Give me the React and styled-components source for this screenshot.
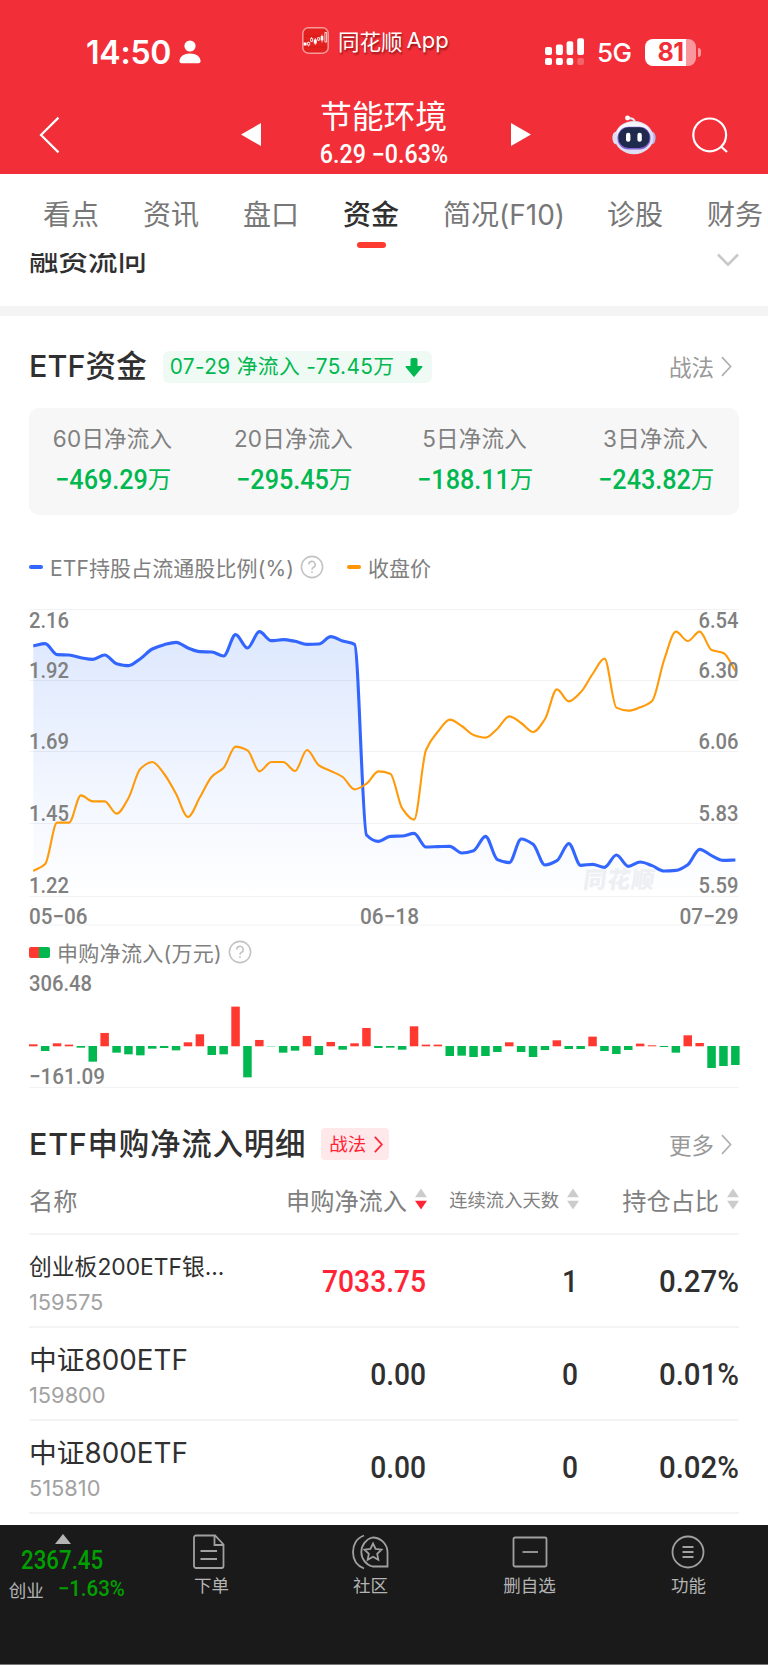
import React from 'react'
import styled, { createGlobalStyle } from 'styled-components'

const blue = [168, 161, 194, 195, 203, 208, 195, 221, 227, 206, 177, 164, 157, 174, 185, 186, 198, 134, 174, 125,
  152, 149, 154, 163, 162, 140, 153, 163, 735, 754, 739, 738, 730, 771, 770, 769, 789, 782, 739, 809,
  818, 747, 763, 825, 812, 761, 826, 823, 832, 795, 829, 816, 827, 843, 841, 824, 778, 797, 811, 810]
const orange = [843, 822, 698, 698, 616, 634, 634, 671, 624, 536, 516, 552, 612, 681, 622, 560, 533, 470, 481, 544,
  516, 516, 543, 480, 526, 543, 561, 598, 581, 544, 551, 655, 689, 480, 425, 389, 408, 435, 443, 416,
  379, 399, 426, 387, 298, 334, 307, 252, 206, 353, 362, 352, 333, 211, 125, 153, 125, 180, 189, 243]
const flow = [6, -15, 9, 5, -5, -47, 40, -20, -25, -28, -8, -6, -13, 12, 36, -27, -25, 119, -94, 19,
  -1, -20, -14, 31, -27, 13, -11, 9, 55, -6, -5, -11, 60, 5, 5, -30, -29, -33, -30, -18,
  12, -18, -33, -12, 18, -9, -9, 29, -15, -24, -12, 8, 3, -3, -20, 33, 10, -66, -60, -57]

const STEP = 11.9

// monotone cubic through evenly spaced points
const curve = (values) => {
  const p = values.map((v, i) => [4.3 + i * STEP, v / 3 - 10])
  const d = p.slice(1).map((q, i) => (q[1] - p[i][1]) / STEP)
  const m = p.map((q, i) => {
    if (i === 0) return d[0]
    if (i === p.length - 1) return d[i - 1]
    const a = d[i - 1]
    const b = d[i]
    return a * b <= 0 ? 0 : (2 * a * b) / (a + b)
  })
  let path = `M${p[0][0]} ${p[0][1]}`
  for (let i = 1; i < p.length; i++) {
    const h = STEP / 3
    path += `C${p[i - 1][0] + h} ${p[i - 1][1] + m[i - 1] * h} ${p[i][0] - h} ${p[i][1] - m[i] * h} ${p[i][0]} ${p[i][1]}`
  }
  return path
}

const stats = [
  { label: '60日净流入', value: '−469.29' },
  { label: '20日净流入', value: '−295.45' },
  { label: '5日净流入', value: '−188.11' },
  { label: '3日净流入', value: '−243.82' },
]

const rows = [
  { name: '创业板200ETF银...', code: '159575', amount: '7033.75', days: '1', ratio: '0.27%', small: true, up: true },
  { name: '中证800ETF', code: '159800', amount: '0.00', days: '0', ratio: '0.01%' },
  { name: '中证800ETF', code: '515810', amount: '0.00', days: '0', ratio: '0.02%' },
]

const Label = ({ x, y, w, end, children }) => (
  <text x={end ? x - w : x} y={y} textLength={w} lengthAdjust="spacingAndGlyphs">{children}</text>
)

const Help = () => (
  <svg width="24" height="24" viewBox="0 0 24 24" fill="none" stroke="#c4c4c4" strokeWidth="1.6">
    <circle cx="12" cy="12" r="10.6" />
    <path d="M8.8 9.6a3.2 3.2 0 1 1 4.8 2.7c-1.1.6-1.6 1.1-1.6 2.4" />
    <path d="M12 16.2v1.8" />
  </svg>
)

const Arrow = ({ color = '#b0b0b0', width = 11, height = 21, stroke = 1.7 }) => (
  <svg width={width} height={height} viewBox="0 0 11 21" fill="none" stroke={color} strokeWidth={stroke}>
    <path d="M1 1.2L9.6 10.5L1 19.8" />
  </svg>
)

const Sort = ({ down }) => (
  <svg width="12" height="22" viewBox="0 0 12 22">
    <path d="M6 0.5L12 9.3H0Z" fill="#cccccc" />
    <path d="M6 21.5L12 12.7H0Z" fill={down ? '#ff2436' : '#cccccc'} />
  </svg>
)

const Robot = () => (
  <svg width="44" height="42" viewBox="0 0 44 42">
    <path d="M16 4.5c4-1 6.5.5 7 4" fill="none" stroke="#e9e9f8" strokeWidth="2" />
    <circle cx="15.5" cy="4" r="2.4" fill="#fff" />
    <ellipse cx="3.8" cy="24" rx="3.4" ry="6.2" fill="#dcdcf2" />
    <ellipse cx="40.2" cy="24" rx="3.4" ry="6.2" fill="#b9b6e6" />
    <ellipse cx="22" cy="23.6" rx="19.4" ry="16.6" fill="#dedff2" />
    <ellipse cx="21.5" cy="19.5" rx="16.5" ry="11.5" fill="#f6f6fd" />
    <rect x="5.5" y="12.7" width="33" height="22.8" rx="11" fill="#8763d8" />
    <rect x="6.4" y="13.2" width="31.2" height="20.8" rx="10.2" fill="#1f2a4c" />
    <rect x="14" y="18.8" width="4.4" height="9" rx="2.1" fill="#fff" />
    <rect x="25.4" y="18.8" width="4.4" height="9" rx="2.1" fill="#fff" />
  </svg>
)

const Header = () => (
  <Top>
    <StatusBar>
      <Time>14:50</Time>
      <svg width="22" height="24" viewBox="0 0 22 24" fill="#fff">
        <circle cx="11" cy="6" r="5.6" />
        <path d="M0.5 21.2C0.5 16.5 5 13.6 11 13.6S21.5 16.5 21.5 21.2Q21.5 23.2 19.5 23.2H2.5Q0.5 23.2 0.5 21.2Z" />
      </svg>
      <Brand>
        <svg width="27" height="27" viewBox="0 0 27 27">
          <rect x="0.8" y="0.8" width="25.4" height="25.4" rx="5.5" fill="#e3211f" stroke="#f79a9c" strokeWidth="1.5" />
          <path d="M2 9h23M2 14h23M2 20h23" stroke="#c91a1b" strokeWidth="0.5" />
          <path d="M1.6 15.5h3v3h-3zM11.8 12.5h3v4h-3zM18.7 9h2.6v4.4h-2.6z" fill="#fff" />
          <path d="M6.6 14.5v5M9.6 10v5M13.3 11v7M16.6 10v4M20 7.5v8" stroke="#fff" strokeWidth="0.7" />
          <path d="M5.5 15.5h2.2v2.5H5.5zM8.6 11.5h2v2.8h-2zM15.6 10.7h2v2.5h-2zM22.9 5.5h1.7v9.6h-1.7z" fill="#e3211f" stroke="#fff" strokeWidth="0.8" />
        </svg>
        <span>同花顺</span><b>App</b>
      </Brand>
      <svg width="40" height="28" viewBox="0 0 40 28" fill="#fff">
        <rect x="0" y="9" width="7" height="8" rx="2" />
        <rect x="10.9" y="6.6" width="7" height="10.4" rx="2" />
        <rect x="21.6" y="3.3" width="6.6" height="13.7" rx="2" />
        <rect x="32.2" y="0.3" width="6.8" height="16.7" rx="2" />
        <rect x="0" y="20" width="7" height="7" rx="2" />
        <rect x="10.9" y="20" width="7" height="7" rx="2" />
        <rect x="21.6" y="20" width="6.6" height="7" rx="2" />
        <rect x="32.2" y="20" width="6.8" height="7" rx="2" opacity="0.25" />
      </svg>
      <Network>5G</Network>
      <Battery><span>81</span></Battery>
      <BatteryTip />
    </StatusBar>
    <NavBar>
      <svg width="21" height="38" viewBox="0 0 21 38" fill="none" stroke="#fff" strokeWidth="2.2">
        <path d="M19.5 1.6L2 19L19.5 36.4" />
      </svg>
      <Left width="20" height="23" viewBox="0 0 20 23"><path d="M0 11.5L20 0V23Z" fill="#fff" /></Left>
      <Stock>
        <h1>节能环境</h1>
        <Num $size={25} $scale={0.93} $weight={500}>6.29 −0.63%</Num>
      </Stock>
      <Right width="20" height="23" viewBox="0 0 20 23"><path d="M20 11.5L0 0V23Z" fill="#fff" /></Right>
      <Robot />
      <Search width="38" height="38" viewBox="0 0 38 38" fill="none" stroke="#fff" strokeWidth="2.2">
        <circle cx="18.7" cy="18.9" r="16.4" />
        <path d="M30 30.5L36 36" />
      </Search>
    </NavBar>
  </Top>
)

const App = () => (
  <Page>
    <GlobalStyle />
    <Header />
    <Tabs>
      <Tab>看点</Tab>
      <Tab>资讯</Tab>
      <Tab>盘口</Tab>
      <Tab $active>资金</Tab>
      <Tab $tight>简况(F10)</Tab>
      <Tab>诊股</Tab>
      <Tab>财务</Tab>
    </Tabs>
    <Collapsed>
      <h2>融资流向</h2>
      <svg width="22" height="14" viewBox="0 0 22 14" fill="none" stroke="#c8c8c8" strokeWidth="2.6">
        <path d="M1 1.5L11 11.7L21 1.5" />
      </svg>
    </Collapsed>
    <Divider />

    <Heading $top={28}>
      <h2>ETF资金</h2>
      <FlowBadge>
        07-29 净流入 -75.45万
        <svg width="18" height="19" viewBox="0 0 18 19" fill="#00b84f">
          <path d="M5.5 1.5Q5.5 0 7 0h4Q12.5 0 12.5 1.5V8H17Q18 8.4 17.3 9.3L9.6 18.4Q9 19 8.4 18.4L.7 9.3Q0 8.4 1 8H5.5Z" />
        </svg>
      </FlowBadge>
      <More>战法<Arrow /></More>
    </Heading>
    <Stats>
      {stats.map((s) => (
        <Stat key={s.label}>
          <span>{s.label}</span>
          <StatValue><Num $size={28} $scale={0.9} $weight={500}>{s.value}</Num><i>万</i></StatValue>
        </Stat>
      ))}
    </Stats>

    <Legend>
      <Dash $color="#3366ff" />
      <LegendText $spacing={0.1}>ETF持股占流通股比例(%)</LegendText>
      <Help />
      <Dash $color="#ff9500" $gap={23} />
      <LegendText>收盘价</LegendText>
    </Legend>
    <Chart width="710" height="330" viewBox="0 0 710 330">
      <defs>
        <linearGradient id="fill" x1="0" y1="30" x2="0" y2="297" gradientUnits="userSpaceOnUse">
          <stop offset="0" stopColor="#3a78f8" stopOpacity="0.17" />
          <stop offset="1" stopColor="#3a78f8" stopOpacity="0" />
        </linearGradient>
      </defs>
      <path d={`${curve(blue)}V296H4.3Z`} fill="url(#fill)" />
      <path d="M0 9.5H710M0 80.5H710M0 151.5H710M0 223.5H710M0 296.5H710M0 325H710" stroke="#000" strokeOpacity="0.05" />
      <Watermark x="594" y="288" textLength="71" transform="skewX(-8)">同花顺</Watermark>
      <path d={curve(blue)} fill="none" stroke="#3366ff" strokeWidth="3.1" strokeLinejoin="round" />
      <path d={curve(orange)} fill="none" stroke="#ff9a0a" strokeWidth="2.1" strokeLinejoin="round" />
      <g>
        <Label x={0} y={28} w={40}>2.16</Label>
        <Label x={0} y={78} w={40}>1.92</Label>
        <Label x={0} y={149} w={40}>1.69</Label>
        <Label x={0} y={221} w={40}>1.45</Label>
        <Label x={0} y={293} w={40}>1.22</Label>
        <Label end x={709.5} y={28} w={40}>6.54</Label>
        <Label end x={709.5} y={78} w={40}>6.30</Label>
        <Label end x={709.5} y={149} w={40}>6.06</Label>
        <Label end x={709.5} y={221} w={40}>5.83</Label>
        <Label end x={709.5} y={293} w={40}>5.59</Label>
        <Label x={0} y={323.5} w={58.5}>05−06</Label>
        <Label x={331} y={323.5} w={59}>06−18</Label>
        <Label end x={709.5} y={323.5} w={59}>07−29</Label>
      </g>
    </Chart>
    <BarLegend>
      <Swatch />
      <LegendText $spacing={0.3}>申购净流入(万元)</LegendText>
      <Help />
    </BarLegend>
    <Chart width="710" height="120" viewBox="0 0 710 120">
      {flow.map((v, i) => (
        <rect
          key={i}
          x={i * STEP}
          y={v > 0 ? 77.3 - v / 3 : 77}
          width="8.5"
          height={Math.abs(v) / 3}
          fill={v > 0 ? '#ff3930' : '#00b84f'}
        />
      ))}
      <path d="M0 118.5H710" stroke="#f3f3f3" />
      <Label x={0} y={21.5} w={63}>306.48</Label>
      <Label x={0} y={114.5} w={76}>−161.09</Label>
    </Chart>

    <Heading $top={33} $spacing={0.75}>
      <h2>ETF申购净流入明细</h2>
      <TipBadge>战法<Arrow color="#ff2436" width={9} height={17} stroke={2.2} /></TipBadge>
      <More>更多<Arrow /></More>
    </Heading>
    <TableHead>
      <Cell $left>名称</Cell>
      <Cell>申购净流入<Sort down /></Cell>
      <Cell $small>连续流入天数<Sort /></Cell>
      <Cell>持仓占比<Sort /></Cell>
    </TableHead>
    {rows.map((r) => (
      <Row key={r.code}>
        <Fund $small={r.small}>
          <b>{r.name}</b>
          <span>{r.code}</span>
        </Fund>
        <Value $up={r.up}>{r.amount}</Value>
        <Value>{r.days}</Value>
        <Value $last>{r.ratio}</Value>
      </Row>
    ))}

    <BottomBar>
      <Index>
        <svg width="16" height="10" viewBox="0 0 16 10"><path d="M8 0L16 10H0Z" fill="#b4b4b4" /></svg>
        <Num $size={25} $scale={0.89} $weight={500}>2367.45</Num>
        <div>创业<Num $size={21.5} $scale={0.95} $weight={500}>−1.63%</Num></div>
      </Index>
      <Action $shift={5}>
        <svg width="36" height="36" viewBox="0 0 36 36">
          <path d="M5 1.5H24L32.5 10.5V32A2 2 0 0 1 30.5 34H5A2 2 0 0 1 3 32V3.500A2 2 0 0 1 5 1.500ZM23.500 2V11H32M9.500 17H26M9.500 25H26" />
        </svg>
        下单
      </Action>
      <Action $shift={2}>
        <svg width="38" height="36" viewBox="0 0 38 36">
          <path d="M21.500 3.500A15 15 0 0 0 21.500 32.500H36.500V18A15 15 0 0 0 21.500 3.500Z" />
          <path d="M13 1.500C5.500 4 2 11 2 18S5.500 31.500 13 34.500" />
          <path d="M22 9.500L24.600 14.900L30.500 15.700L26.200 19.800L27.300 25.700L22 22.800L16.700 25.700L17.800 19.800L13.500 15.700L19.400 14.900Z" />
        </svg>
        社区
      </Action>
      <Action>
        <svg width="36" height="36" viewBox="0 0 36 36">
          <rect x="1.5" y="3.5" width="33" height="29" rx="1.500" />
          <path d="M10.500 18H26" />
        </svg>
        删自选
      </Action>
      <Action $shift={2}>
        <svg width="34" height="36" viewBox="0 0 34 36">
          <circle cx="17" cy="18" r="15.500" />
          <path d="M11.500 13H22.500M11.500 18H22.500M11.500 23H22.500" />
        </svg>
        功能
      </Action>
    </BottomBar>
  </Page>
)

export default App

const GlobalStyle = createGlobalStyle`
  * {
    box-sizing: border-box;
  }
  body {
    margin: 0;
    background: #fff;
  }
  h1, h2 {
    margin: 0;
  }
  svg {
    flex-shrink: 0;
  }
`

const Page = styled.div`
  width: 768px;
  height: 1665px;
  overflow: hidden;
  display: flex;
  flex-direction: column;
  background: #fff;
  color: #303030;
  font-family: Inter, 'Noto Sans CJK SC', sans-serif;
  white-space: nowrap;
`

const Num = styled.span`
  display: inline-block;
  font-family: Roboto, 'Liberation Sans', sans-serif;
  font-size: ${(props) => props.$size}px;
  font-weight: ${(props) => props.$weight};
  line-height: 28px;
  transform: scaleX(${(props) => props.$scale});
`

const Top = styled.header`
  height: 174px;
  flex-shrink: 0;
  background: #f22f38;
  color: #fff;
`

const StatusBar = styled.div`
  height: 96px;
  padding: 8px 0 0 86px;
  display: flex;
  align-items: center;
`

const Time = styled.div`
  width: 93px;
  font-size: 32px;
  font-weight: 600;
  letter-spacing: -0.2px;
`

const Brand = styled.div`
  width: 243px;
  margin-left: 101px;
  margin-bottom: 24px;
  display: flex;
  align-items: center;
  font-size: 21.5px;
  text-shadow: 1px 2px 2px rgba(90, 0, 0, 0.6);

  span {
    margin-left: 9px;
  }
  b {
    margin-left: 4px;
    font-weight: 400;
    font-size: 22px;
  }
`

const Network = styled.div`
  width: 48px;
  margin-left: 12px;
  font-size: 26px;
  font-weight: 500;
  letter-spacing: -0.5px;
`

const Battery = styled.div`
  width: 51px;
  height: 27px;
  border-radius: 8px;
  background: linear-gradient(90deg, #fff 41px, #f8979c 41px);
  color: #f22f38;
  font-size: 25px;
  font-weight: 700;
  line-height: 27px;
  text-align: center;
  letter-spacing: -0.5px;
`

const BatteryTip = styled.div`
  width: 3px;
  height: 9px;
  margin-left: 2px;
  border-radius: 0 4px 4px 0;
  background: #f8979c;
`

const NavBar = styled.nav`
  height: 77px;
  padding-left: 39px;
  display: flex;
  align-items: center;
`

const Left = styled.svg`
  margin-left: 181px;
`

const Right = styled.svg`
  margin-right: 81px;
`

const Search = styled.svg`
  margin-left: 35px;
`

const Stock = styled.div`
  width: 250px;
  padding-right: 5px;
  display: flex;
  flex-direction: column;
  align-items: center;

  h1 {
    height: 44px;
    margin-top: -3px;
    font-size: 31.8px;
    font-weight: 400;
    line-height: 40px;
  }
`

const Tabs = styled.div`
  height: 79px;
  flex-shrink: 0;
  padding-left: 43px;
  display: flex;
  gap: 44px;
  position: relative;
  background: #fff;
`

const Tab = styled.div`
  position: relative;
  margin-right: ${(props) => (props.$tight ? -2 : 0)}px;
  font-size: 28px;
  line-height: 82px;
  color: ${(props) => (props.$active ? '#303030' : '#777')};
  font-weight: ${(props) => (props.$active ? 500 : 400)};

  &::after {
    content: '';
    display: ${(props) => (props.$active ? 'block' : 'none')};
    position: absolute;
    left: 14px;
    top: 68px;
    width: 29px;
    height: 6px;
    border-radius: 3px;
    background: #ff3a30;
  }
`

const Collapsed = styled.div`
  height: 53px;
  flex-shrink: 0;
  padding: 0 29px;
  display: flex;
  justify-content: space-between;
  align-items: flex-start;
  overflow: hidden;

  h2 {
    margin-top: -16px;
    font-size: 29.5px;
    line-height: 44px;
    font-weight: 500;
  }
`

const Divider = styled.div`
  height: 10px;
  flex-shrink: 0;
  background: #f4f4f4;
`

const Heading = styled.div`
  height: 44px;
  flex-shrink: 0;
  margin: ${(props) => props.$top}px 29px 0;
  display: flex;
  align-items: center;

  h2 {
    font-size: 30.5px;
    line-height: 44px;
    font-weight: 500;
    letter-spacing: ${(props) => props.$spacing || 0.1}px;
  }
`

const FlowBadge = styled.div`
  width: 269px;
  height: 32px;
  margin-left: 16px;
  margin-top: 2px;
  padding: 0 9px 0 7px;
  display: flex;
  align-items: center;
  justify-content: space-between;
  border-radius: 6px;
  background: #f0faf5;
  color: #00b84f;
  font-size: 20.8px;
  line-height: 32px;
  letter-spacing: 0.35px;
`

const TipBadge = styled.div`
  width: 68px;
  height: 32px;
  margin-left: 15px;
  padding: 0 6px 0 8px;
  display: flex;
  align-items: center;
  justify-content: space-between;
  border-radius: 4px;
  background: #ffe8ea;
  color: #ff2436;
  font-size: 18.5px;
  line-height: 32px;
`

const More = styled.div`
  margin-left: auto;
  margin-right: 7px;
  display: flex;
  align-items: center;
  gap: 7px;
  color: #999;
  font-size: 22.5px;
`

const Stats = styled.div`
  height: 107px;
  flex-shrink: 0;
  margin: 20px 29px 0;
  padding: 15px 24px 0;
  display: flex;
  justify-content: space-between;
  border-radius: 10px;
  background: #f7f7f7;
`

const Stat = styled.div`
  width: 119px;
  display: flex;
  flex-direction: column;
  align-items: center;
  color: #808080;
  font-size: 22.5px;
  line-height: 32px;
  letter-spacing: 0.2px;
`

const StatValue = styled.div`
  height: 40px;
  margin-top: 5px;
  margin-left: -4px;
  display: flex;
  align-items: center;
  color: #00b84f;
  letter-spacing: 0;

  i {
    margin-left: -5px;
    font-style: normal;
    font-size: 23.5px;
  }
`

const Legend = styled.div`
  height: 32px;
  flex-shrink: 0;
  margin: 36px 29px 0;
  display: flex;
  align-items: center;
`

const BarLegend = styled(Legend)`
  margin-top: 6px;
`

const Dash = styled.div`
  width: 14px;
  height: 4px;
  margin-left: ${(props) => props.$gap || 0}px;
  border-radius: 2px;
  background: ${(props) => props.$color};
`

const Swatch = styled.div`
  width: 21px;
  height: 11px;
  border-radius: 2px;
  background: linear-gradient(90deg, #ff3930 50%, #00b84f 50%);
`

const LegendText = styled.div`
  margin: 0 6px 0 7px;
  color: #808080;
  font-size: 21px;
  letter-spacing: ${(props) => props.$spacing || 0}px;
`

const Chart = styled.svg`
  display: block;
  overflow: visible;
  margin: 0 29px;
  margin-top: ${(props) => (props.height === '330' ? 17 : 1)}px;

  text {
    fill: #808080;
    font-family: Roboto, 'Liberation Sans', sans-serif;
    font-size: 22px;
    font-weight: 500;
  }
`

const Watermark = styled.text`
  && {
    fill: #eeeff2;
    font-family: 'Noto Sans CJK SC', sans-serif;
    font-size: 23px;
    font-weight: 900;
  }
`

const columns = '198px 200px 152px 160px'

const TableHead = styled.div`
  height: 69px;
  flex-shrink: 0;
  margin: 0 29px;
  display: grid;
  grid-template-columns: ${columns};
  border-bottom: 2px solid #f4f4f4;
`

const Cell = styled.div`
  height: 66px;
  display: flex;
  align-items: center;
  justify-content: ${(props) => (props.$left ? 'flex-start' : 'flex-end')};
  gap: 8px;
  color: #808080;
  font-size: ${(props) => (props.$small ? 18.3 : 24.2)}px;
`

const Row = styled.div`
  height: 93px;
  flex-shrink: 0;
  margin: 0 29px;
  display: grid;
  grid-template-columns: ${columns};
  border-bottom: 2px solid #f4f4f4;
`

const Fund = styled.div`
  display: flex;
  flex-direction: column;

  b {
    height: 36px;
    margin-top: 14px;
    font-size: ${(props) => (props.$small ? 22.8 : 27.8)}px;
    font-weight: 400;
    line-height: 36px;
  }
  span {
    color: #a2a2a2;
    font-size: 21.8px;
    line-height: 34px;
  }
`

const Value = styled.div`
  padding-top: 1px;
  padding-right: ${(props) => (props.$last ? 0 : 1)}px;
  color: ${(props) => (props.$up ? '#ff2436' : '#303030')};
  font-family: Roboto, 'Liberation Sans', sans-serif;
  font-size: 31px;
  font-weight: 500;
  line-height: 92px;
  text-align: right;
  transform: scaleX(${(props) => (props.$last ? 0.95 : 0.91)});
  transform-origin: right;
`

const BottomBar = styled.footer`
  height: 140px;
  flex-shrink: 0;
  margin-top: auto;
  display: grid;
  grid-template-columns: 132px repeat(4, 159px);
  background: #1a1a1a;
  border-bottom: 1px solid #777;
  color: #b4b4b4;
  font-size: 17.5px;
`

const Index = styled.div`
  padding: 9px 7px 0 0;
  display: flex;
  flex-direction: column;
  align-items: center;

  > span {
    margin-top: 3px;
    color: #00a000;
  }
  div {
    display: flex;
    align-items: center;
    gap: 12px;
    padding-left: 10px;
  }
  div span {
    color: #00a000;
  }
`

const Action = styled.div`
  padding-top: 9px;
  display: flex;
  flex-direction: column;
  align-items: center;
  line-height: 32px;

  svg {
    margin-right: ${(props) => props.$shift || 0}px;
    fill: none;
    stroke: #a0a0a0;
    stroke-width: 1.8;
  }
`
